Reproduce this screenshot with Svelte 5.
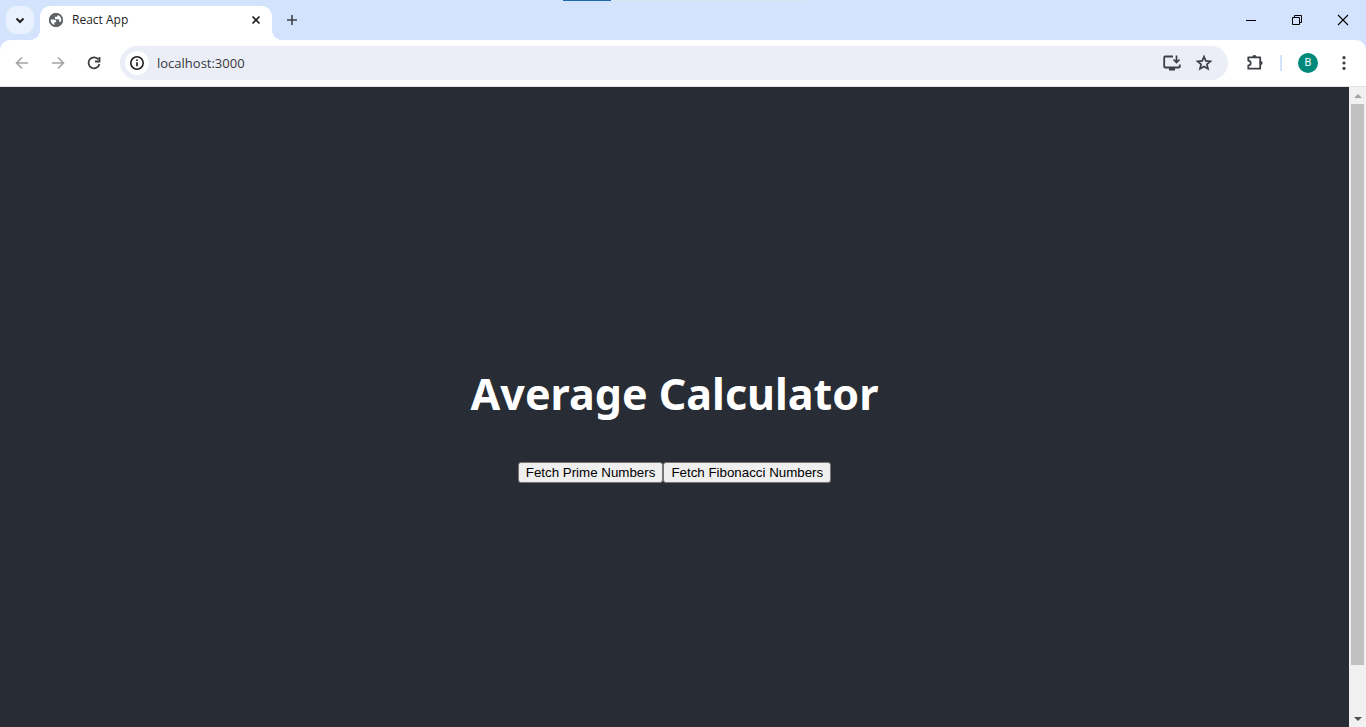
<script>
  let address = $state('localhost:3000');
</script>

<div class="window">
  <header class="tabstrip">
    <span class="progress"><span></span></span>
    <button class="search-tabs" aria-label="Search tabs">
      <svg width="28" height="28" viewBox="0 0 28 28"><path d="M10.5 12.5 14 16l3.500-3.500" fill="none" stroke="#1f1f1f" stroke-width="2" /></svg>
    </button>
    <div class="tab">
      <svg width="16" height="16" viewBox="0 0 16 16">
        <circle cx="8" cy="8" r="7" fill="#5f6368" />
        <path d="M2.200 7.400h3.600c1.500 0 2.400.9 2.400 2.200v.7H6.400v2.800C3.900 12.600 2.100 10.400 2.200 7.400ZM9.800 2.300v1.200c0 .8-.6 1.300-1.400 1.300H7v1.400c0 .7.500 1 1.200 1h1.600c.9 0 1.400.5 1.400 1.300v1.200h2.300c.9-3-.8-5.600-3.700-7.400Z" fill="#fff" />
        <circle cx="8" cy="8" r="6.200" fill="none" stroke="#5f6368" stroke-width="1.500" />
      </svg>
      <span class="tab-title">React App</span>
      <button class="close-tab" aria-label="Close tab">
        <svg width="16" height="16" viewBox="0 0 16 16"><path d="m4.500 4.500 7 7m0-7-7 7" stroke="#1f1f1f" stroke-width="1.700" /></svg>
      </button>
    </div>
    <button class="new-tab" aria-label="New tab">
      <svg width="16" height="16" viewBox="0 0 16 16"><path d="M8 3v10M3 8h10" stroke="#3f4349" stroke-width="1.600" /></svg>
    </button>
    <div class="controls">
      <button aria-label="Minimize"><svg width="12" height="12" viewBox="0 0 12 12"><path d="M1 6.500h10" stroke="#000" /></svg></button>
      <button aria-label="Restore"><svg width="12" height="12" viewBox="0 0 12 12"><path d="M1.500 3.500h7v7h-7zM3.500 3.500v-2h7v7h-2" fill="none" stroke="#000" /></svg></button>
      <button aria-label="Close"><svg width="12" height="12" viewBox="0 0 12 12"><path d="m1 1 10 10M11 1 1 11" stroke="#000" stroke-width="1.100" /></svg></button>
    </div>
  </header>

  <nav class="toolbar">
    <button class="icon" aria-label="Back" disabled>
      <svg width="20" height="20" viewBox="0 0 20 20"><path d="M16 10H5M10 4.500 4.500 10l5.500 5.500" fill="none" stroke="#a3a3a5" stroke-width="1.600" /></svg>
    </button>
    <button class="icon" aria-label="Forward" disabled>
      <svg width="20" height="20" viewBox="0 0 20 20"><path d="M4 10h11M10 4.500l5.500 5.500-5.500 5.500" fill="none" stroke="#a3a3a5" stroke-width="1.600" /></svg>
    </button>
    <button class="icon" aria-label="Reload">
      <svg width="20" height="20" viewBox="0 0 20 20"><path d="M14.500 6.600A5.500 5.500 0 1 0 15.400 11" fill="none" stroke="#3c3c3c" stroke-width="1.800" /><path d="M15.500 4v4.500H11" fill="none" stroke="#3c3c3c" stroke-width="1.800" /></svg>
    </button>
    <div class="omnibox">
      <button class="site-info" aria-label="View site information">
        <svg width="16" height="16" viewBox="0 0 16 16"><circle cx="8" cy="8" r="6.200" fill="none" stroke="#1f1f1f" stroke-width="1.600" /><path d="M8 7.200v4M8 4.500v1.600" stroke="#1f1f1f" stroke-width="1.700" /></svg>
      </button>
      <input type="text" aria-label="Address" bind:value={address} />
      <button class="icon small" aria-label="Install app">
        <svg width="20" height="20" viewBox="0 0 20 20"><path d="M11 3.500H3.200q-1 0-1 1v9q0 1 1 1h13.600q1 0 1-1V11.500" fill="none" stroke="#3c3f43" stroke-width="1.800" /><path d="M7 15h6v2.500H7z" fill="#3c3f43" /><path d="M14.500 2.500v6.500M11.500 6.500l3 3 3-3" fill="none" stroke="#3c3f43" stroke-width="1.700" /></svg>
      </button>
      <button class="icon small" aria-label="Bookmark this tab">
        <svg width="20" height="20" viewBox="0 0 20 20"><path d="m10 3.700 1.800 4.200 4.600.4-3.500 3 1.100 4.500-4-2.400-4 2.400 1.100-4.500-3.500-3 4.600-.4Z" fill="none" stroke="#3c3f43" stroke-width="1.700" /></svg>
      </button>
    </div>
    <button class="icon extensions" aria-label="Extensions">
      <svg width="20" height="20" viewBox="0 0 20 20"><path d="M4 4.300h11.200v11.400H3.300V12.500q2.400 0 2.400-2.400T3.300 7.600V4.300Z" fill="none" stroke="#3c3f43" stroke-width="1.800" stroke-linejoin="round" /><path d="M7.300 4a2.100 2.100 0 0 1 4.200 0ZM15.500 8a2.100 2.100 0 0 1 0 4.200Z" fill="#3c3f43" /></svg>
    </button>
    <span class="divider"></span>
    <button class="avatar" aria-label="Profile B">B</button>
    <button class="icon menu" aria-label="Menu">
      <svg width="20" height="20" viewBox="0 0 20 20" fill="#3c3f43"><circle cx="10" cy="4.700" r="1.600" /><circle cx="10" cy="10" r="1.600" /><circle cx="10" cy="15.300" r="1.600" /></svg>
    </button>
  </nav>

  <div class="viewport">
    <main>
      <h1>Average Calculator</h1>
      <div class="actions">
        <button>Fetch Prime Numbers</button><button>Fetch Fibonacci Numbers</button>
      </div>
    </main>
    <div class="scrollbar" aria-hidden="true">
      <svg width="17" height="17" viewBox="0 0 17 17"><path d="m5 11 4-4 4 4z" fill="#a3a3a3" /></svg>
      <div class="track"><div class="thumb"></div></div>
      <svg width="17" height="17" viewBox="0 0 17 17"><path d="m5 7 4 4 4-4z" fill="#505050" /></svg>
    </div>
  </div>
</div>

<style>
  :global(body) {
    margin: 0;
  }

  .window {
    display: flex;
    flex-direction: column;
    height: 100vh;
    overflow: hidden;
    background: #d3e3fd;
    font-family: "Open Sans", "Noto Sans", sans-serif;
  }

  .tabstrip button,
  .toolbar button {
    display: flex;
    align-items: center;
    justify-content: center;
    flex: none;
    padding: 0;
    border: 0;
    background: none;
  }

  svg {
    display: block;
    flex: none;
  }

  .tabstrip {
    position: relative;
    display: flex;
    align-items: center;
    flex: none;
    height: 40px;
    padding-left: 6px;
  }

  .progress {
    position: absolute;
    top: 0;
    left: 50%;
    width: 242px;
    height: 1px;
    margin-left: -120px;
    background: #dde5f1;
  }

  .progress span {
    display: block;
    width: 20%;
    height: 1px;
    background: #1b69b2;
  }

  .tabstrip .search-tabs {
    width: 28px;
    height: 28px;
    border-radius: 10px;
    background: #e9f1fe;
  }

  .tab {
    position: relative;
    display: flex;
    align-items: center;
    align-self: flex-end;
    box-sizing: border-box;
    width: 232px;
    height: 34px;
    margin-left: 6px;
    padding: 0 8px 6px;
    border-radius: 10px 10px 0 0;
    background: #fff;
  }

  .tab::before,
  .tab::after {
    content: "";
    position: absolute;
    bottom: 0;
    width: 10px;
    height: 10px;
  }

  .tab::before {
    right: 100%;
    background: radial-gradient(circle at 0 0, transparent 10px, #fff 10px);
  }

  .tab::after {
    left: 100%;
    background: radial-gradient(circle at 100% 0, transparent 10px, #fff 10px);
  }

  .tab-title {
    flex: 1;
    margin-left: 8px;
    color: #1f1f1f;
    font-size: 12px;
    line-height: 18px;
  }

  .new-tab {
    width: 28px;
    height: 28px;
    margin-left: 6px;
  }

  .controls {
    display: flex;
    height: 40px;
    margin-left: auto;
  }

  .tabstrip .controls button {
    width: 46px;
  }

  .toolbar {
    display: flex;
    align-items: center;
    flex: none;
    height: 46px;
    padding: 0 12px;
    border-bottom: 1px solid #dfe1e4;
    border-radius: 10px 10px 0 0;
    background: #fff;
  }

  .icon {
    width: 20px;
    height: 20px;
    margin-right: 16px;
  }

  .omnibox {
    display: flex;
    align-items: center;
    flex: 1;
    height: 34px;
    padding: 0 14px 0 5px;
    border-radius: 17px;
    background: #ebeef7;
  }

  .toolbar .site-info {
    width: 24px;
    height: 24px;
    border-radius: 50%;
    background: #fff;
  }

  input {
    flex: 1;
    min-width: 0;
    margin-left: 8px;
    padding: 0;
    border: 0;
    outline: 0;
    background: none;
    color: #36383c;
    font: 13px/20px "Open Sans", "Noto Sans", sans-serif;
  }

  .small {
    margin-right: 0;
  }

  .small + .small {
    margin-left: 12px;
  }

  .extensions {
    margin: 0 15px 0 17px;
  }

  .divider {
    width: 2px;
    height: 16px;
    margin-right: 16px;
    background: #d3e3fd;
  }

  .toolbar .avatar {
    width: 20px;
    height: 20px;
    border-radius: 50%;
    background: #00897b;
    color: #fff;
    font: 11px/20px Roboto, sans-serif;
  }

  .menu {
    margin: 0 0 0 16px;
  }

  .viewport {
    display: flex;
    flex: 1;
    min-height: 0;
  }

  main {
    display: flex;
    flex: 1;
    flex-direction: column;
    align-items: center;
    justify-content: center;
    background: #282c34;
    color: #fff;
  }

  h1 {
    margin: 32px 0 38px;
    font-family: "Noto Sans", "Open Sans", sans-serif;
    font-size: 43px;
    font-weight: 700;
    line-height: 60px;
  }

  .actions {
    display: flex;
  }

  .actions button {
    padding: 2px 7px;
    border: 1px solid #767676;
    border-radius: 3px;
    background: #efefef;
    color: #000;
    font-family: "Liberation Sans", Arial, sans-serif;
  }

  .scrollbar {
    display: flex;
    flex-direction: column;
    width: 17px;
    background: #f1f1f1;
  }

  .track {
    flex: 1;
    padding: 0 2px;
  }

  .thumb {
    height: 92.500%;
    background: #c1c1c1;
  }
</style>
